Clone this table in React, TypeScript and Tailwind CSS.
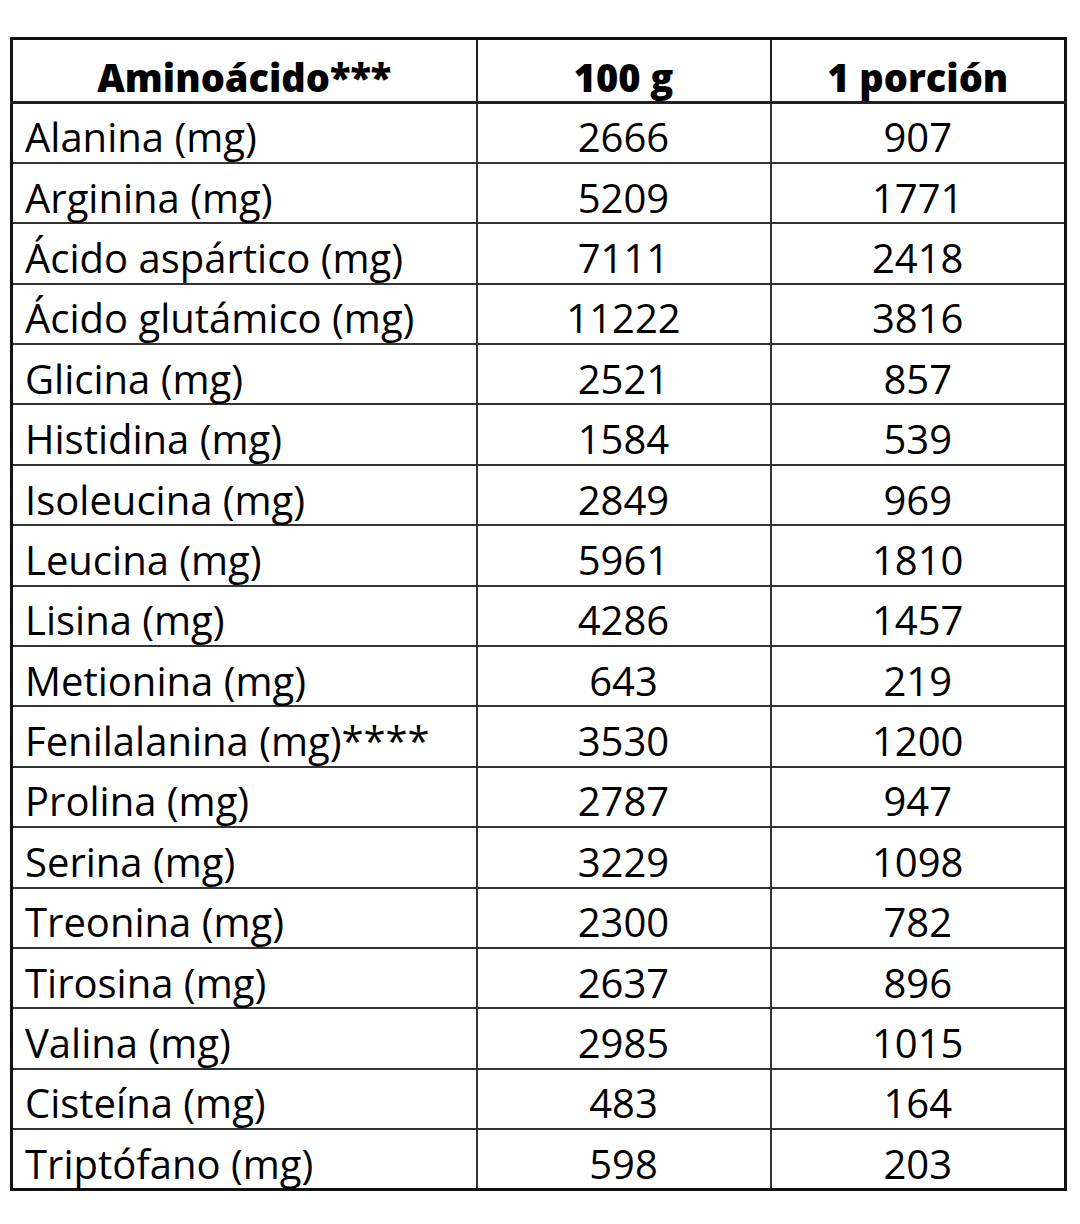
const rows: [string, string, string][] = [
  ["Alanina (mg)", "2666", "907"],
  ["Arginina (mg)", "5209", "1771"],
  ["Ácido aspártico (mg)", "7111", "2418"],
  ["Ácido glutámico (mg)", "11222", "3816"],
  ["Glicina (mg)", "2521", "857"],
  ["Histidina (mg)", "1584", "539"],
  ["Isoleucina (mg)", "2849", "969"],
  ["Leucina (mg)", "5961", "1810"],
  ["Lisina (mg)", "4286", "1457"],
  ["Metionina (mg)", "643", "219"],
  ["Fenilalanina (mg)****", "3530", "1200"],
  ["Prolina (mg)", "2787", "947"],
  ["Serina (mg)", "3229", "1098"],
  ["Treonina (mg)", "2300", "782"],
  ["Tirosina (mg)", "2637", "896"],
  ["Valina (mg)", "2985", "1015"],
  ["Cisteína (mg)", "483", "164"],
  ["Triptófano (mg)", "598", "203"],
]

export default function App() {
  return (
    <div className="w-[1080px] h-[1224px] bg-white pt-[37px] pl-[10px] font-['Open_Sans',sans-serif] text-black">
      <table className="w-[1054px] border-collapse border-[3px] border-[#111] table-fixed">
        <colgroup>
          <col className="w-[465px]" />
          <col className="w-[294px]" />
          <col className="w-[295px]" />
        </colgroup>
        <thead>
          <tr className="h-[64px] border-b-[3px] border-[#222]">
            <th className="border-r-2 border-[#222] text-[38px] font-extrabold text-center pt-[12px] leading-none">Aminoácido***</th>
            <th className="border-r-2 border-[#222] text-[38px] font-extrabold text-center pt-[12px] leading-none">100 g</th>
            <th className="text-[38px] font-extrabold text-center pt-[12px] leading-none">1 porción</th>
          </tr>
        </thead>
        <tbody>
          {rows.map(([name, a, b]) => (
            <tr key={name} className="h-[60.4px] border-b-2 border-[#333] last:border-b-0">
              <td className="border-r-2 border-[#333] pl-[12px] pt-[9px] text-[40px] leading-none whitespace-nowrap">{name}</td>
              <td className="border-r-2 border-[#333] pt-[9px] text-center text-[40px] leading-none">{a}</td>
              <td className="pt-[9px] text-center text-[40px] leading-none">{b}</td>
            </tr>
          ))}
        </tbody>
      </table>
    </div>
  )
}
